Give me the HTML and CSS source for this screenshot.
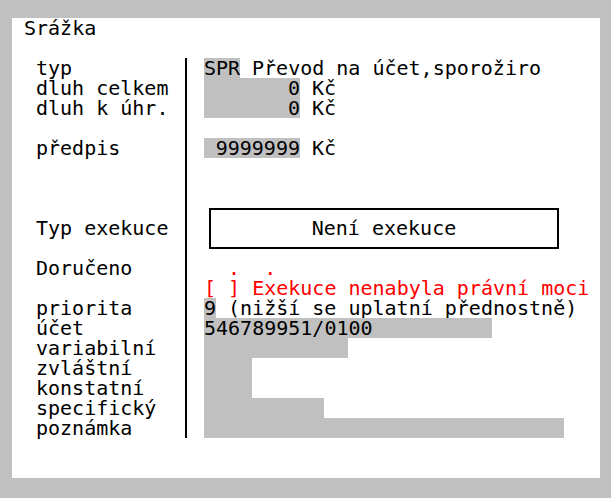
FILE: index.html
```html
<!DOCTYPE html>
<html lang="cs">
<head>
    <meta charset="UTF-8">
    <meta name="viewport" content="width=device-width, initial-scale=1.0">
    <title>Srážka</title>
    <link rel="stylesheet" href="styles.css">
</head>
<body>

    <div class="panel">
        <div class="title">Srážka</div>

        <div class="form">
            <!-- typ a dluh -->
            <div class="row">
                <div class="label">typ</div>
                <div class="value"><span class="field w3">SPR</span> Převod na účet,sporožiro</div>
            </div>
            <div class="row">
                <div class="label">dluh celkem</div>
                <div class="value"><span class="field w8 num">0</span> Kč</div>
            </div>
            <div class="row">
                <div class="label">dluh k úhr.</div>
                <div class="value"><span class="field w8 num">0</span> Kč</div>
            </div>
            <div class="row">
                <div class="label"></div>
                <div class="value"></div>
            </div>
            <div class="row">
                <div class="label">předpis</div>
                <div class="value"><span class="field w8 num">9999999</span> Kč</div>
            </div>
            <div class="row">
                <div class="label"></div>
                <div class="value"></div>
            </div>
            <div class="row">
                <div class="label"></div>
                <div class="value"></div>
            </div>

            <!-- exekuce -->
            <div class="row tall">
                <div class="label">Typ exekuce</div>
                <div class="value">
                    <div class="exec-btn">Není exekuce</div>
                </div>
            </div>
            <div class="row">
                <div class="label">Doručeno</div>
                <div class="value red">  .  .</div>
            </div>
            <div class="row">
                <div class="label"></div>
                <div class="value red">[ ] Exekuce nenabyla právní moci</div>
            </div>

            <!-- platba -->
            <div class="row">
                <div class="label">priorita</div>
                <div class="value"><span class="field w1">9</span> (nižší se uplatní přednostně)</div>
            </div>
            <div class="row">
                <div class="label">účet</div>
                <div class="value"><span class="field w24">546789951/0100</span></div>
            </div>
            <div class="row">
                <div class="label">variabilní</div>
                <div class="value"><span class="field w12"></span></div>
            </div>
            <div class="row">
                <div class="label">zvláštní</div>
                <div class="value"><span class="field w4"></span></div>
            </div>
            <div class="row">
                <div class="label">konstatní</div>
                <div class="value"><span class="field w4"></span></div>
            </div>
            <div class="row">
                <div class="label">specifický</div>
                <div class="value"><span class="field w10"></span></div>
            </div>
            <div class="row">
                <div class="label">poznámka</div>
                <div class="value"><span class="field w30"></span></div>
            </div>
        </div>
    </div>

</body>
</html>
```

FILE: styles.css
```css
/* Global Styles */
* {
    margin: 0;
    padding: 0;
    box-sizing: border-box;
}

body {
    background-color: #c0c0c0;
    font-family: 'DejaVu Sans Mono', monospace;
    font-size: 20px;
    line-height: 20px;
    color: #000;
    overflow: hidden;
}

.panel {
    background-color: #fff;
    margin: 18px 0 0 12px;
    width: 588px;
    height: 460px;
    padding: 0 0 0 12px;
}

.title {
    height: 20px;
    margin-bottom: 20px;
}

.form {
    margin-left: 12px;
}

.row {
    display: flex;
    height: 20px;
}

.row.tall {
    height: 60px;
    align-items: center;
}

.label {
    width: 149px;
    white-space: pre;
}

.value {
    flex: 1;
    height: 100%;
    border-left: 2px solid #000;
    padding-left: 17px;
    white-space: pre;
}

.row.tall .value {
    display: flex;
    align-items: center;
}

/* grey input fields */
.field {
    display: inline-block;
    height: 20px;
    vertical-align: top;
    background-color: #c0c0c0;
}

.num {
    text-align: right;
}

.w1 { width: 12px; }
.w3 { width: 36px; }
.w4 { width: 48px; }
.w8 { width: 96px; }
.w10 { width: 120px; }
.w12 { width: 144px; }
.w24 { width: 288px; }
.w30 { width: 360px; }

.exec-btn {
    width: 350px;
    height: 41px;
    margin-left: 5px;
    border: 2px solid #000;
    display: flex;
    justify-content: center;
    align-items: center;
}

.red {
    color: #ff0000;
}
```
